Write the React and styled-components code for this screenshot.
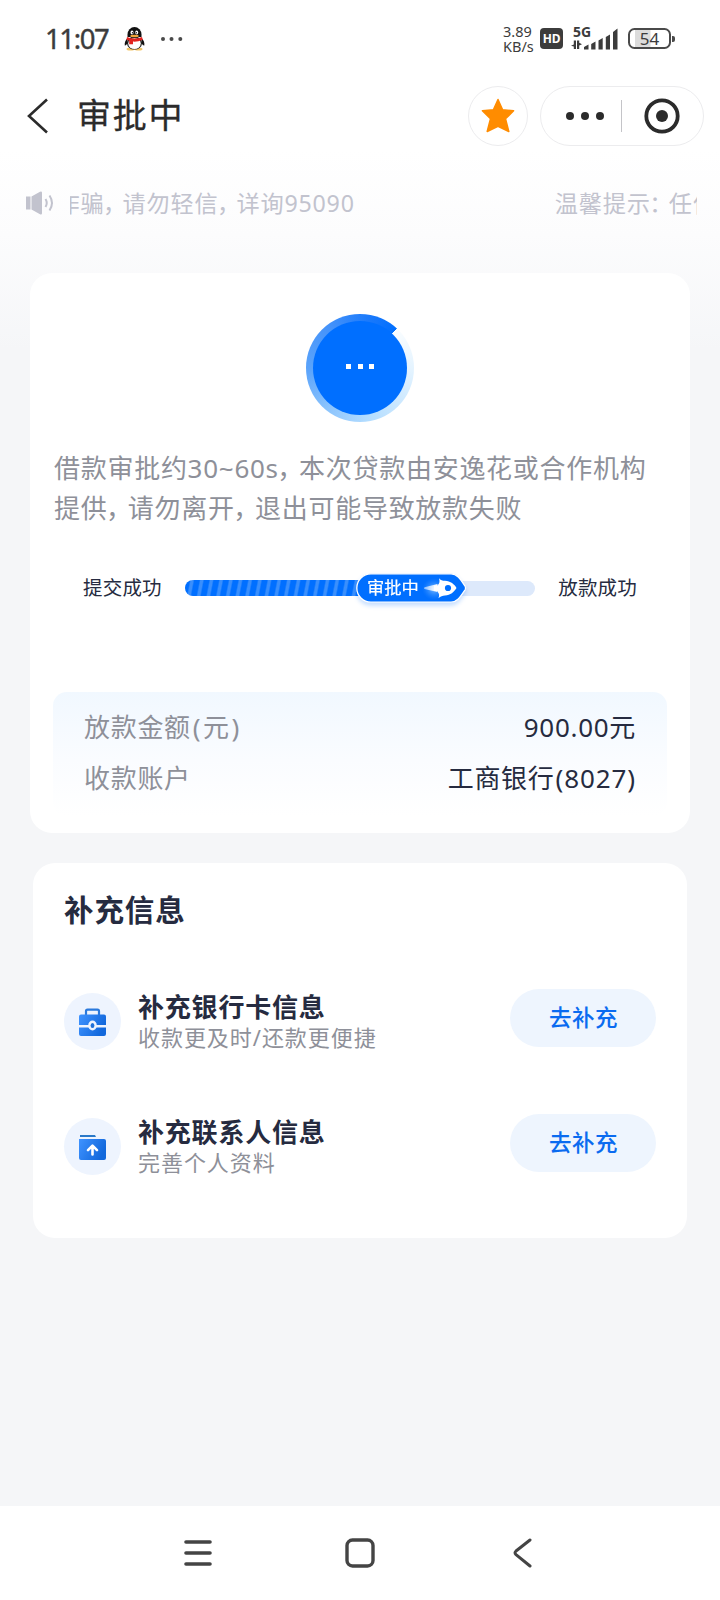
import React from 'react';
import styled, { createGlobalStyle } from 'styled-components';

const Global = createGlobalStyle`
  * { box-sizing: border-box; }
  body { margin: 0; background: #f5f6f8; }
  button { font: inherit; border: 0; padding: 0; background: none; }
  svg { display: block; flex: none; }
`;

const Screen = styled.div`
  width: 720px;
  height: 1600px;
  display: flex;
  flex-direction: column;
  overflow: hidden;
  font-family: 'Noto Sans', 'Noto Sans CJK SC', sans-serif;
  color: #262b40;
  background: linear-gradient(#fff 0, #fff 150px, #fcfcfd 235px, #f5f6f8 350px);
`;

const StatusBar = styled.div`
  height: 78px;
  display: flex;
  align-items: center;
  padding: 0 45px 0 45px;
  color: #3c3c3c;
`;

const Clock = styled.span`
  width: 79px;
  font-size: 27.5px;
  line-height: 36px;
  letter-spacing: -1.4px;
  font-weight: 400;
  -webkit-text-stroke: 0.4px #3c3c3c;
`;

const MoreDots = styled.svg`
  margin-left: 14px;
`;

const Spacer = styled.div`
  flex: 1;
`;

const NetSpeed = styled.div`
  width: 37px;
  display: flex;
  flex-direction: column;
  gap: 1px;
  font-size: 14.5px;
  line-height: 14px;
  white-space: nowrap;
  margin-top: -1px;
`;

const HdBadge = styled.span`
  width: 23px;
  height: 21px;
  margin-top: -1px;
  border-radius: 4px;
  background: #3c3c3c;
  color: #fff;
  font-size: 12px;
  font-weight: 700;
  line-height: 21px;
  text-align: center;
  letter-spacing: -0.2px;
`;

const Signal = styled.div`
  width: 50px;
  height: 26px;
  margin-left: 8px;
  display: grid;
`;

const SignalLabel = styled.span`
  grid-area: 1 / 1;
  font-size: 14px;
  font-weight: 700;
  line-height: 12px;
  padding-left: 2px;
`;

const SignalBars = styled.svg`
  grid-area: 1 / 1;
`;

const Battery = styled.div`
  width: 43px;
  height: 21px;
  margin: -1px 0 0 7px;
  border: 2px solid #4a4a4a;
  border-radius: 6.5px;
  font-size: 17px;
  line-height: 18px;
  text-align: center;
  background: linear-gradient(90deg, transparent 5px, #dcdcdc 5px, #dcdcdc 20px, transparent 21px);
`;

const BatteryTip = styled.div`
  width: 3px;
  height: 6px;
  margin-left: 1px;
  border-radius: 0 2px 2px 0;
  background: #4a4a4a;
`;

const TitleBar = styled.header`
  height: 76px;
  display: flex;
  align-items: center;
  padding: 0 16px 0 27px;
`;

const PageTitle = styled.h1`
  margin: -3px 0 0 29px;
  flex: 1;
  font-size: 34px;
  font-weight: 400;
  line-height: 48px;
  letter-spacing: 1.8px;
  color: #2b2b2b;
  -webkit-text-stroke: 0.3px #2b2b2b;
`;

const StarButton = styled.button`
  width: 60px;
  height: 60px;
  border: 1px solid #ececee;
  border-radius: 50%;
  display: grid;
  place-items: center;
  background: #fff;
`;

const Capsule = styled.div`
  width: 164px;
  height: 60px;
  margin-left: 12px;
  padding: 0 23px 0 25px;
  border: 1px solid #ececee;
  border-radius: 30px;
  display: flex;
  align-items: center;
  justify-content: space-between;
  background: #fff;
`;

const Divider = styled.span`
  width: 1px;
  height: 32px;
  margin-right: 3px;
  margin-left: -3px;
  background: #c4c4c8;
`;

const Notice = styled.div`
  height: 100px;
  display: flex;
  align-items: center;
  padding: 0 23px 2px 26px;
`;

const Marquee = styled.div`
  flex: 1;
  margin-left: 15px;
  display: flex;
  overflow: hidden;
  white-space: nowrap;
  font-size: 23.2px;
  line-height: 34px;
  letter-spacing: 0.8px;
  color: #c2c3ce;
`;

const MarqueeText = styled.span`
  flex: none;
  margin-left: ${(p) => p.$offset}px;
`;

const Punct = styled.span`
  margin-left: -1.5px;
  letter-spacing: -0.16em;
`;

const Cards = styled.main`
  flex: 1;
  padding: 19px 30px 0;
`;

const StatusCard = styled.section`
  height: 560px;
  padding: 41px 23px 0;
  border-radius: 22px;
  display: flex;
  flex-direction: column;
  align-items: stretch;
  background: #fff;
`;

const Spinner = styled.div`
  width: 108px;
  height: 108px;
  align-self: center;
  border-radius: 50%;
  display: grid;
  place-items: center;
  background: conic-gradient(
    from 43deg,
    #fafdff 0deg,
    #e3f3ff 50deg,
    #b2dcff 130deg,
    #8cc4fd 175deg,
    #5ba4fb 225deg,
    #4593fa 280deg,
    #1878fb 330deg,
    #006fff 360deg
  );
`;

const SpinnerCore = styled.div`
  width: 94px;
  height: 94px;
  border-radius: 50%;
  display: flex;
  align-items: center;
  justify-content: center;
  gap: 6.5px;
  background: #006fff;
`;

const SpinnerDot = styled.i`
  width: 5px;
  height: 5px;
  margin-top: -3px;
  background: #fff;
`;

const Description = styled.p`
  margin: 26px 0 0 1px;
  font-size: 26px;
  line-height: 40px;
  letter-spacing: 0.72px;
  white-space: nowrap;
  color: #8e9099;
`;

const Progress = styled.div`
  height: 30px;
  margin-top: 45px;
  padding: 0 30px 0 30px;
  display: flex;
  align-items: center;
  justify-content: space-between;
  font-size: 19.5px;
  line-height: 30px;
  letter-spacing: 0.2px;
`;

const Track = styled.div`
  width: 350px;
  height: 15px;
  border-radius: 8px;
  display: flex;
  align-items: center;
  background: #dde9fb;
`;

const TrackFill = styled.div`
  height: 16px;
  flex: none;
  border-radius: 8px 0 0 8px;
  background: repeating-linear-gradient(101deg, #006fff 0 4.5px, #3a8ffc 6px 8px, #006fff 9.5px);
`;

const Marker = styled.div`
  width: 111px;
  height: 30px;
  flex: none;
  margin-left: -12px;
  display: grid;
  align-items: center;
  filter: drop-shadow(0 3px 2px rgba(0, 111, 255, 0.22));
`;

const MarkerShape = styled.svg`
  grid-area: 1 / 1;
`;

const MarkerText = styled.span`
  grid-area: 1 / 1;
  padding-left: 11px;
  font-size: 17.3px;
  line-height: 30px;
  letter-spacing: 0;
  color: #fff;
  -webkit-text-stroke: 0.2px #fff;
`;

const Summary = styled.dl`
  height: 124px;
  margin: 89px 0 0;
  padding: 9px 31px;
  border-radius: 14px;
  background: linear-gradient(#f1f8ff, #fafcff 55%, #fff 100%);
`;

const SummaryRow = styled.div`
  height: 51px;
  display: flex;
  align-items: center;
  justify-content: space-between;
  font-size: 26px;
  line-height: 40px;
  letter-spacing: 0.7px;

  dt { color: #8e9099; }
  dd { margin: 0; }
`;

const Bracketed = styled.span`
  margin-left: ${(p) => p.$gap || 0}px;
  letter-spacing: ${(p) => p.$spacing}px;
`;

const ExtraCard = styled.section`
  height: 375px;
  margin: 30px 3px 0;
  padding: 25px 31px 0;
  border-radius: 22px;
  background: #fff;
`;

const ExtraTitle = styled.h2`
  margin: 0 0 38px;
  font-size: 29.5px;
  font-weight: 700;
  line-height: 44px;
  letter-spacing: 0.9px;
`;

const ExtraItem = styled.div`
  height: 125px;
  display: flex;
  align-items: flex-start;
`;

const ItemIcon = styled.div`
  width: 57px;
  height: 57px;
  margin-top: 23px;
  padding-top: 1px;
  border-radius: 50%;
  display: grid;
  place-items: center;
  background: #eef4fe;
`;

const ItemText = styled.div`
  flex: 1;
  margin: 21px 0 0 17px;
`;

const ItemTitle = styled.h3`
  margin: 0;
  font-size: 26px;
  font-weight: 700;
  line-height: 32px;
  letter-spacing: 0.8px;
`;

const ItemSub = styled.p`
  margin: 0;
  font-size: 22px;
  line-height: 29px;
  letter-spacing: 0.95px;
  color: #8e9099;
`;

const FillButton = styled.button`
  && {
    width: 146px;
    height: 58px;
    margin-top: 19px;
    border-radius: 29px;
    background: #eef5fe;
    color: #0a6bf0;
    font-size: 22.5px;
    font-weight: 500;
    line-height: 57px;
    letter-spacing: 0.5px;
    padding: 0 0 1px 1px;
  }
`;

const NavBar = styled.nav`
  height: 94px;
  padding: 0 187px 0 184px;
  display: flex;
  align-items: center;
  justify-content: space-between;
  background: #fff;
`;

const HomeKey = styled.svg`
  margin-right: 6px;
`;

const Penguin = () => (
  <svg width="22" height="24" viewBox="0 0 22 24">
    <ellipse cx="6.5" cy="22" rx="4" ry="1.6" fill="#f3c667" />
    <ellipse cx="14.5" cy="22" rx="4" ry="1.6" fill="#f3c667" />
    <path d="M3.5 11C1.5 13 .3 16 .8 18.5c1 .2 2-1 2.700-2.500M17.500 11c2.200 2 3.300 5 2.800 7.500-1 .2-2.200-1-2.800-2.500" fill="#111" />
    <ellipse cx="10.500" cy="16" rx="7.500" ry="6.600" fill="#111" />
    <ellipse cx="10.500" cy="16.500" rx="6.300" ry="5.600" fill="#fff" />
    <path d="M3.500 10V7.500a7 7.500 0 0 1 14 0V10z" fill="#111" />
    <ellipse cx="8" cy="5.600" rx="1.500" ry="2" fill="#fff" />
    <ellipse cx="12.700" cy="5.600" rx="1.500" ry="2" fill="#fff" />
    <circle cx="8.500" cy="5.800" r=".7" fill="#111" />
    <circle cx="12.300" cy="5.800" r=".7" fill="#111" />
    <ellipse cx="10.500" cy="9" rx="4.300" ry="1.300" fill="#f0a43a" />
    <path d="M3 10c5 2 10 2 15 0l.8 2.800c-3.500 1.600-7 2-9.800 1.800v2.600H5.200v-3.500L2.500 12.800z" fill="#e2231f" />
  </svg>
);

const Bars = () => (
  <SignalBars width="50" height="26" viewBox="0 0 50 26" fill="#3c3c3c">
    <path d="M5 14.500v8.500H2.800v-2.500L0 19.700l2.800-1.200v-4zM6 14.500h2.200v2.300l2.800 1.400-2.800 1.200V23H6z" />
    <path d="M13 21l4.500-2.500v5H13zM20.200 18l4.300-2.500v8h-4.300zM27.500 14.500l4.200-2.500v11.500h-4.200zM34.800 11l4.200-2.500v15h-4.200zM42 6l4.500-3.500v21H42z" />
  </SignalBars>
);

const Rocket = () => (
  <MarkerShape width="111" height="30" viewBox="0 0 111 30">
    <defs>
      <radialGradient id="glow">
        <stop offset="0" stopColor="#8cc4ff" stopOpacity=".9" />
        <stop offset="1" stopColor="#2c8bff" stopOpacity="0" />
      </radialGradient>
      <linearGradient id="flame">
        <stop offset="0" stopColor="#fff" stopOpacity=".5" />
        <stop offset="1" stopColor="#fff" />
      </linearGradient>
    </defs>
    <path
      d="M15 .8H95c6 0 9 4.700 14 12.200q1.200 2 0 4C104 24.500 101 29.200 95 29.200H15A14.200 14.200 0 0 1 15 .8z"
      fill="#006fff"
      stroke="#fff"
      strokeWidth="1.300"
    />
    <ellipse cx="78" cy="16" rx="12" ry="11" fill="url(#glow)" />
    <path d="M68.500 14.200l13-3.200v8l-13-3q-1-.9 0-1.800z" fill="url(#flame)" />
    <path d="M83 5.200c1.500 2 3.500 2.600 6 2.600 5.500.4 9.500 3.500 11.500 7.200-2.500 4-6 7.200-11.500 7.600-2.500 0-4.500 1-6.500 2.600 1-2.800.8-4.200-.8-6.100v-6.900c2-2 2.200-3.500 1.300-7z" fill="#fff" />
    <path d="M78 12.500h5v5.500h-5z" fill="#fff" />
    <circle cx="92" cy="15" r="3.100" fill="#006fff" />
  </MarkerShape>
);

const BlueGradient = ({ id }) => (
  <linearGradient id={id} x1="0" y1="0" x2="1" y2="0.4">
    <stop offset="0" stopColor="#3f93ff" />
    <stop offset="1" stopColor="#1268dc" />
  </linearGradient>
);

const Briefcase = () => (
  <svg width="27" height="29" viewBox="0 0 27 29">
    <defs><BlueGradient id="case" /></defs>
    <path d="M7 7V3.200q0-1.500 1.500-1.500h10q1.500 0 1.500 1.500V7" fill="none" stroke="#2a79dc" strokeWidth="2.200" />
    <path d="M2 6.500h23q2 0 2 2v8.500H0V8.500q0-2 2-2zM0 19.500h27V26q0 2-2 2H2q-2 0-2-2z" fill="url(#case)" />
    <ellipse cx="13.500" cy="17.500" rx="4.300" ry="5" fill="#eef4fe" />
    <ellipse cx="13.500" cy="17.500" rx="1.900" ry="2.600" fill="#1f70d8" />
  </svg>
);

const Folder = () => (
  <svg width="27" height="27" viewBox="0 0 27 27">
    <defs><BlueGradient id="folder" /></defs>
    <path d="M1 1h15l1 2H1z" fill="#2a79c8" />
    <path d="M0 5h25q2 0 2 2v17q0 2-2 2H2q-2 0-2-2z" fill="url(#folder)" />
    <path d="M13.500 20.500v-8M9 16.200l4.500-4.500 4.500 4.500" fill="none" stroke="#fff" strokeWidth="2.600" strokeLinecap="round" strokeLinejoin="round" />
  </svg>
);

const items = [
  { title: '补充银行卡信息', sub: '收款更及时/还款更便捷', Icon: Briefcase },
  { title: '补充联系人信息', sub: '完善个人资料', Icon: Folder },
];

export default function App() {
  return (
    <>
      <Global />
      <Screen>
        <StatusBar>
          <Clock>11:07</Clock>
          <Penguin />
          <MoreDots width="24" height="6" viewBox="0 0 24 6" fill="#4a4a4a">
            <circle cx="3" cy="3" r="2" />
            <circle cx="11.500" cy="3" r="2" />
            <circle cx="20.300" cy="3" r="2" />
          </MoreDots>
          <Spacer />
          <NetSpeed>
            <span>3.89</span>
            <span>KB/s</span>
          </NetSpeed>
          <HdBadge>HD</HdBadge>
          <Signal>
            <SignalLabel>5G</SignalLabel>
            <Bars />
          </Signal>
          <Battery>54</Battery>
          <BatteryTip />
        </StatusBar>

        <TitleBar>
          <svg width="21" height="36" viewBox="0 0 21 36" fill="none" stroke="#2b2b2b" strokeWidth="2.600">
            <path d="M20 1.500L2 18l18 16.500" />
          </svg>
          <PageTitle>审批中</PageTitle>
          <StarButton>
            <svg width="34" height="36" viewBox="0 0 34 36">
              <path
                d="M17 1.500l4.600 10.300 11 1-8.100 8L27.800 33.500 17 28.300 6.200 33.500 9.500 20.800 1.400 12.800l11-1z"
                fill="#ff8c00" stroke="#ff8c00" strokeWidth="1.500" strokeLinejoin="round"
              />
            </svg>
          </StarButton>
          <Capsule>
            <svg width="38" height="8" viewBox="0 0 38 8" fill="#2b2b2b">
              <circle cx="4" cy="4" r="4" />
              <circle cx="19" cy="4" r="4" />
              <circle cx="34" cy="4" r="4" />
            </svg>
            <Divider />
            <svg width="36" height="36" viewBox="0 0 36 36">
              <circle cx="18" cy="18" r="15.700" fill="none" stroke="#2b2b2b" strokeWidth="3.800" />
              <circle cx="18" cy="18" r="6" fill="#2b2b2b" />
            </svg>
          </Capsule>
        </TitleBar>

        <Notice>
          <svg width="29" height="24" viewBox="0 0 29 24" fill="#c2c3ce">
            <path d="M0 5.500h4.500v13H0zM5.500 5.500L14 .7q2-.7 2 1v20.600q0 1.700-2 1L5.500 18.500z" />
            <path d="M19.500 8q2.500 4 0 8M23.500 4.500q5 7.500 0 15" fill="none" stroke="#c2c3ce" strokeWidth="2" />
          </svg>
          <Marquee>
            <MarqueeText $offset={-13.5}>
              诈骗<Punct>，</Punct>请勿轻信<Punct>，</Punct>详询95090
            </MarqueeText>
            <MarqueeText $offset={200}>
              温馨提示<Punct>：</Punct>任何
            </MarqueeText>
          </Marquee>
        </Notice>

        <Cards>
          <StatusCard>
            <Spinner>
              <SpinnerCore>
                <SpinnerDot />
                <SpinnerDot />
                <SpinnerDot />
              </SpinnerCore>
            </Spinner>
            <Description>
              借款审批约30~60s<Punct>，</Punct>本次贷款由安逸花或合作机构
              <br />
              提供<Punct>，</Punct>请勿离开<Punct>，</Punct>退出可能导致放款失败
            </Description>
            <Progress>
              <span>提交成功</span>
              <Track>
                <TrackFill style={{ width: `${(183 / 350) * 100}%` }} />
                <Marker>
                  <Rocket />
                  <MarkerText>审批中</MarkerText>
                </Marker>
              </Track>
              <span>放款成功</span>
            </Progress>
            <Summary>
              <SummaryRow>
                <dt>放款金额<Bracketed $gap={2} $spacing={2.4}>(元)</Bracketed></dt>
                <dd>900.00元</dd>
              </SummaryRow>
              <SummaryRow>
                <dt>收款账户</dt>
                <dd>工商银行<Bracketed $gap={1} $spacing={0.9}>(8027)</Bracketed></dd>
              </SummaryRow>
            </Summary>
          </StatusCard>

          <ExtraCard>
            <ExtraTitle>补充信息</ExtraTitle>
            {items.map(({ title, sub, Icon }) => (
              <ExtraItem key={title}>
                <ItemIcon><Icon /></ItemIcon>
                <ItemText>
                  <ItemTitle>{title}</ItemTitle>
                  <ItemSub>{sub}</ItemSub>
                </ItemText>
                <FillButton>去补充</FillButton>
              </ExtraItem>
            ))}
          </ExtraCard>
        </Cards>

        <NavBar>
          <svg width="28" height="28" viewBox="0 0 28 28" stroke="#444" strokeWidth="3.600" strokeLinecap="round">
            <path d="M2 3h24M2 14h24M2 25h24" />
          </svg>
          <HomeKey width="30" height="30" viewBox="0 0 30 30" fill="none" stroke="#444" strokeWidth="3.400">
            <rect x="2" y="2" width="26" height="26" rx="5.500" />
          </HomeKey>
          <svg width="20" height="30" viewBox="0 0 20 30" fill="none" stroke="#444" strokeWidth="3" strokeLinecap="round" strokeLinejoin="round">
            <path d="M17 2L3 13q-2 1.800 0 3.600L17 28" />
          </svg>
        </NavBar>
      </Screen>
    </>
  );
}
